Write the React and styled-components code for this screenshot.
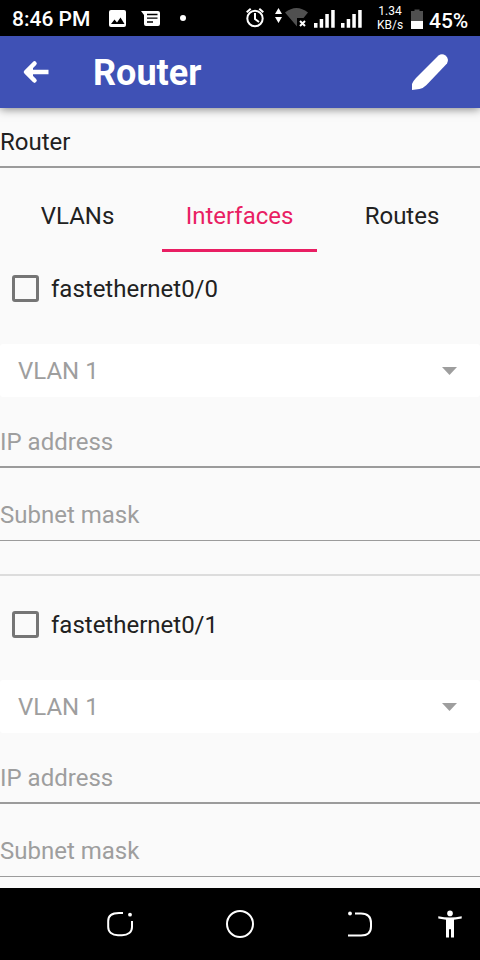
import React from "react";
import styled, { createGlobalStyle } from "styled-components";

const GlobalStyle = createGlobalStyle`
  * { box-sizing: border-box; }
  body { margin: 0; background: #fafafa; font-family: Roboto, "Noto Sans", sans-serif; }
`;

const Screen = styled.div`
  width: 480px;
  height: 960px;
  display: flex;
  flex-direction: column;
  overflow: hidden;
  background: #fafafa;
  color: #212121;
`;

const StatusBar = styled.div`
  flex: none;
  height: 36px;
  padding: 0 12px;
  display: flex;
  background: #000;
  color: #fff;
`;

const StatusText = styled.span`
  flex: none;
  width: ${(p) => p.$width}px;
  margin-left: ${(p) => p.$left || 0}px;
  margin-top: ${(p) => p.$top}px;
  font-size: 21px;
  line-height: 25px;
  font-weight: 500;
  white-space: nowrap;
`;

const Glyph = styled.svg`
  flex: none;
  display: block;
  margin-left: ${(p) => p.$left || 0}px;
  overflow: visible;
`;

const Speed = styled.div`
  flex: none;
  width: 30px;
  margin-left: 13px;
  padding-top: 5px;
  font-size: 12px;
  line-height: 13.5px;
  text-align: center;
  white-space: nowrap;
`;

const AppBar = styled.header`
  flex: none;
  height: 72px;
  padding: 0 32px 0 22px;
  display: flex;
  align-items: center;
  background: #3f51b5;
  color: #fff;
  position: relative;
  box-shadow: 0 1px 9px rgba(0, 0, 0, 0.5);
`;

const Title = styled.h1`
  flex: 1;
  margin: 0 0 0 44px;
  padding-top: 2px;
  font-size: 36px;
  line-height: 42px;
  font-weight: 700;
`;

const Content = styled.main`
  flex: 1;
  min-height: 0;
  overflow: hidden;
`;

const Field = styled.div`
  height: ${(p) => p.$height}px;
  padding-bottom: ${(p) => p.$gap}px;
  border-bottom: ${(p) => p.$line || 2}px solid #9b9b9b;
  display: flex;
  align-items: flex-end;
  font-size: 24px;
  line-height: 28px;
  color: ${(p) => (p.$filled ? "#212121" : "#9e9e9e")};
`;

const Tabs = styled.nav`
  height: 84px;
  padding-top: 14px;
  display: grid;
  grid-template-columns: 155px 155px 156px;
  justify-content: center;
  column-gap: 7px;
`;

const Tab = styled.div`
  display: flex;
  align-items: center;
  justify-content: center;
  border-bottom: 3px solid ${(p) => (p.$active ? "#e91e63" : "transparent")};
  color: ${(p) => (p.$active ? "#e91e63" : "#212121")};
  font-size: 24px;
  line-height: 28px;
`;

const InterfaceCard = styled.section`
  height: 336px;
  display: flex;
  flex-direction: column;
`;

const CheckRow = styled.div`
  height: 80px;
  margin-bottom: 12px;
  padding: 23px 0 0 12px;
  display: flex;
  align-items: flex-start;
  gap: 12px;
  font-size: 24px;
  line-height: 28px;
`;

const Box = styled.span`
  width: 27px;
  height: 27px;
  border: 3px solid #757575;
  border-radius: 3px;
`;

const Select = styled.div`
  height: 53px;
  margin-bottom: 1px;
  padding: 0 23px 0 18px;
  display: flex;
  align-items: center;
  justify-content: space-between;
  border-radius: 3px;
  background: #fff;
  color: #9e9e9e;
  font-size: 24px;
  line-height: 28px;
`;

const Divider = styled.div`
  margin-top: 33px;
  height: 2px;
  background: #dcdcdc;
`;

const NavBar = styled.footer`
  flex: none;
  height: 72px;
  padding: 22px 18px 0 107px;
  display: flex;
  background: #000;
`;

const SignalBars = ({ left }) => (
  <Glyph $left={left} width="21" height="36" fill="#fff">
    <path d="M0 23h3.500v4.700H0zM5.700 19h3.500v8.700h-3.500zM11.300 14h3.500v13.700h-3.500zM17.200 10h3.500v17.700h-3.500z" />
  </Glyph>
);

const Interface = ({ name }) => (
  <InterfaceCard>
    <CheckRow>
      <Box />
      <span>{name}</span>
    </CheckRow>
    <Select>
      <span>VLAN 1</span>
      <Glyph width="15" height="8" fill="#9e9e9e">
        <path d="M0 0h15L7.500 8z" />
      </Glyph>
    </Select>
    <Field $height={70} $gap={10}>IP address</Field>
    <Field $height={73} $gap={11} $line={1}>Subnet mask</Field>
    <Divider />
  </InterfaceCard>
);

export default function App() {
  return (
    <Screen>
      <GlobalStyle />
      <StatusBar>
        <StatusText $width={97} $top={7}>8:46 PM</StatusText>
        <Glyph width="17" height="36">
          <rect y="10" width="17" height="17" rx="2" fill="#fff" />
          <path d="M2 24l3.500-4.500 2.500 3 3.500-5 4 6.500z" fill="#000" />
        </Glyph>
        <Glyph $left={15} width="19" height="36">
          <path d="M0 11h17q2 0 2 2v11q0 2-2 2H5q-2 0-2-2v-9z" fill="#fff" />
          <path d="M6 14.500h10.500M6 18.200h10.500M6 22h6" stroke="#000" strokeWidth="1.300" />
        </Glyph>
        <Glyph $left={20} width="6" height="36">
          <circle cx="3" cy="18" r="3" fill="#fff" />
        </Glyph>
        <Glyph $left={60} width="18" height="36" fill="none" stroke="#fff" strokeWidth="2">
          <circle cx="9" cy="18.500" r="7.700" />
          <path d="M9 13v6l4 3M.7 12.300l4-3.500M17.300 12.300l-4-3.500" />
        </Glyph>
        <Glyph $left={11} width="7" height="36" fill="#fff">
          <path d="M0 14l3.500-6L7 14zM0 17h7l-3.500 6z" />
        </Glyph>
        <Glyph $left={3} width="23" height="36">
          <path d="M0 12.500Q11.500 3.500 23 12.500L18.500 18H12v8.500z" fill="#505050" />
          <path d="M15 21l5 5M20 21l-5 5" stroke="#fff" strokeWidth="2" />
        </Glyph>
        <SignalBars left={6} />
        <SignalBars left={6} />
        <Speed>
          <div>1.34</div>
          <div>KB/s</div>
        </Speed>
        <Glyph $left={6} width="12" height="36">
          <path d="M0 11h3.500V9.500h5V11H12v10H0z" fill="#505050" />
          <path d="M0 21h12v8H0z" fill="#fff" />
        </Glyph>
        <StatusText $left={6} $width={40} $top={9}>45%</StatusText>
      </StatusBar>
      <AppBar>
        <Glyph width="27" height="24" fill="none" stroke="#fff" strokeWidth="4.500">
          <path d="M4 12H26.500" />
          <path d="M12.500 3.500L4 12l8.500 8.500" strokeLinecap="round" strokeLinejoin="round" />
          <path d="M4 12l7-6v12z" fill="#fff" stroke="none" />
        </Glyph>
        <Title>Router</Title>
        <Glyph width="36" height="36" fill="#fff">
          <path d="M0 36V30Q1.500 26.500 4 24L26.500 1.500Q30-1 33.500 1.500Q37.500 5 35 9.500L14.500 31Q11 34.500 7.500 35z" />
        </Glyph>
      </AppBar>
      <Content>
        <Field $height={60} $gap={10} $filled>Router</Field>
        <Tabs>
          <Tab>VLANs</Tab>
          <Tab $active>Interfaces</Tab>
          <Tab>Routes</Tab>
        </Tabs>
        <Interface name="fastethernet0/0" />
        <Interface name="fastethernet0/1" />
      </Content>
      <NavBar>
        <Glyph width="26" height="28" fill="none" stroke="#fff" strokeWidth="2">
          <path d="M16 3H12C5 3 1.200 6 1.200 11V17C1.200 22 5 25.200 11 25.200H15C21 25.200 25 22 25 17V11" />
          <circle cx="23" cy="4.700" r="1.900" fill="#fff" stroke="none" />
        </Glyph>
        <Glyph $left={93} width="28" height="28" fill="none" stroke="#fff" strokeWidth="2">
          <circle cx="14" cy="14" r="13" />
        </Glyph>
        <Glyph $left={94} width="24" height="28" fill="none" stroke="#fff" strokeWidth="2">
          <path d="M7 3.500H13Q23 3.500 23 13V16.500Q23 25.500 13 25.500H0" />
          <circle cx="2" cy="3.500" r="1.900" fill="#fff" stroke="none" />
        </Glyph>
        <Glyph $left={66} width="24" height="28" fill="#fff">
          <circle cx="12" cy="3.400" r="2.800" />
          <path d="M.3 6.300Q12 8.800 23.700 6.300V8.500L16 9.800V27.600H13V19.300H11V27.600H8V9.800L.3 8.500z" />
        </Glyph>
      </NavBar>
    </Screen>
  );
}
